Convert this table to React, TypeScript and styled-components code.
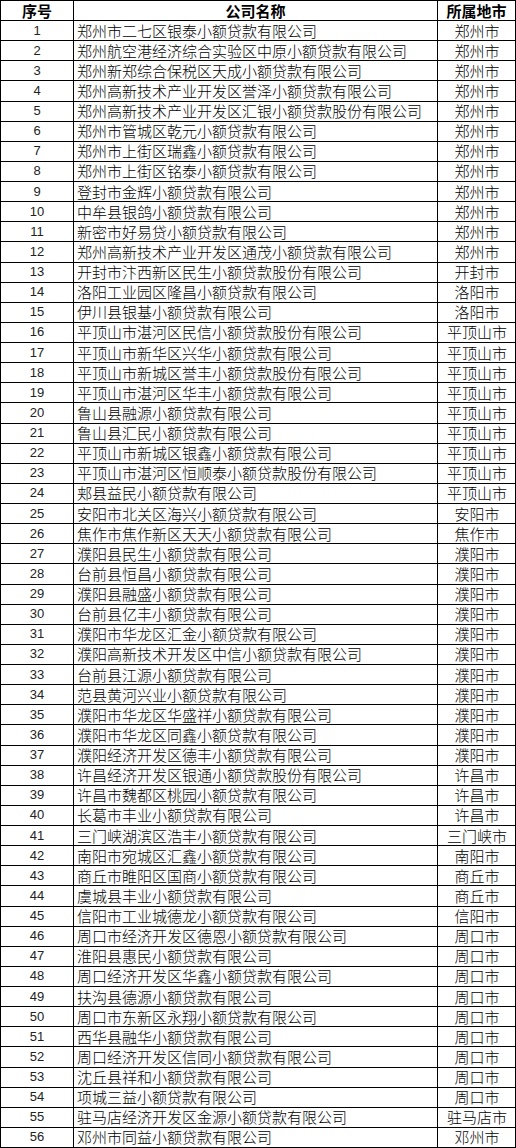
import React from "react";
import styled, { createGlobalStyle } from "styled-components";

const Global = createGlobalStyle`
  html, body { margin: 0; padding: 0; background: #fff; }
  body { font-family: "Noto Sans CJK SC", "Liberation Sans", sans-serif; color: #000; }
`;

type Row = [string, string];

const rows: Row[] = [
  ["郑州市二七区银泰小额贷款有限公司", "郑州市"],
  ["郑州航空港经济综合实验区中原小额贷款有限公司", "郑州市"],
  ["郑州新郑综合保税区天成小额贷款有限公司", "郑州市"],
  ["郑州高新技术产业开发区誉泽小额贷款有限公司", "郑州市"],
  ["郑州高新技术产业开发区汇银小额贷款股份有限公司", "郑州市"],
  ["郑州市管城区乾元小额贷款有限公司", "郑州市"],
  ["郑州市上街区瑞鑫小额贷款有限公司", "郑州市"],
  ["郑州市上街区铭泰小额贷款有限公司", "郑州市"],
  ["登封市金辉小额贷款有限公司", "郑州市"],
  ["中牟县银鸽小额贷款有限公司", "郑州市"],
  ["新密市好易贷小额贷款有限公司", "郑州市"],
  ["郑州高新技术产业开发区通茂小额贷款有限公司", "郑州市"],
  ["开封市汴西新区民生小额贷款股份有限公司", "开封市"],
  ["洛阳工业园区隆昌小额贷款有限公司", "洛阳市"],
  ["伊川县银基小额贷款有限公司", "洛阳市"],
  ["平顶山市湛河区民信小额贷款股份有限公司", "平顶山市"],
  ["平顶山市新华区兴华小额贷款有限公司", "平顶山市"],
  ["平顶山市新城区誉丰小额贷款股份有限公司", "平顶山市"],
  ["平顶山市湛河区华丰小额贷款有限公司", "平顶山市"],
  ["鲁山县融源小额贷款有限公司", "平顶山市"],
  ["鲁山县汇民小额贷款有限公司", "平顶山市"],
  ["平顶山市新城区银鑫小额贷款有限公司", "平顶山市"],
  ["平顶山市湛河区恒顺泰小额贷款股份有限公司", "平顶山市"],
  ["郏县益民小额贷款有限公司", "平顶山市"],
  ["安阳市北关区海兴小额贷款有限公司", "安阳市"],
  ["焦作市焦作新区天天小额贷款有限公司", "焦作市"],
  ["濮阳县民生小额贷款有限公司", "濮阳市"],
  ["台前县恒昌小额贷款有限公司", "濮阳市"],
  ["濮阳县融盛小额贷款有限公司", "濮阳市"],
  ["台前县亿丰小额贷款有限公司", "濮阳市"],
  ["濮阳市华龙区汇金小额贷款有限公司", "濮阳市"],
  ["濮阳高新技术开发区中信小额贷款有限公司", "濮阳市"],
  ["台前县江源小额贷款有限公司", "濮阳市"],
  ["范县黄河兴业小额贷款有限公司", "濮阳市"],
  ["濮阳市华龙区华盛祥小额贷款有限公司", "濮阳市"],
  ["濮阳市华龙区同鑫小额贷款有限公司", "濮阳市"],
  ["濮阳经济开发区德丰小额贷款有限公司", "濮阳市"],
  ["许昌经济开发区银通小额贷款股份有限公司", "许昌市"],
  ["许昌市魏都区桃园小额贷款有限公司", "许昌市"],
  ["长葛市丰业小额贷款有限公司", "许昌市"],
  ["三门峡湖滨区浩丰小额贷款有限公司", "三门峡市"],
  ["南阳市宛城区汇鑫小额贷款有限公司", "南阳市"],
  ["商丘市睢阳区国商小额贷款有限公司", "商丘市"],
  ["虞城县丰业小额贷款有限公司", "商丘市"],
  ["信阳市工业城德龙小额贷款有限公司", "信阳市"],
  ["周口市经济开发区德恩小额贷款有限公司", "周口市"],
  ["淮阳县惠民小额贷款有限公司", "周口市"],
  ["周口经济开发区华鑫小额贷款有限公司", "周口市"],
  ["扶沟县德源小额贷款有限公司", "周口市"],
  ["周口市东新区永翔小额贷款有限公司", "周口市"],
  ["西华县融华小额贷款有限公司", "周口市"],
  ["周口经济开发区信同小额贷款有限公司", "周口市"],
  ["沈丘县祥和小额贷款有限公司", "周口市"],
  ["项城三益小额贷款有限公司", "周口市"],
  ["驻马店经济开发区金源小额贷款有限公司", "驻马店市"],
  ["邓州市同益小额贷款有限公司", "邓州市"],
];

const Sheet = styled.table`
  width: 515px;
  border-collapse: collapse;
  table-layout: fixed;
  border: 1px solid #000;
`;

const HeadRow = styled.tr`
  height: 20px;
`;

const BodyRow = styled.tr`
  height: 20.125px;
`;

const HeadCell = styled.th`
  border: 1px solid #000;
  padding: 0;
  font-family: "Noto Sans CJK SC", sans-serif;
  font-weight: 700;
  font-size: 15px;
  line-height: 18px;
  text-align: center;
  vertical-align: middle;
  white-space: nowrap;
  overflow: hidden;
`;

const NumCell = styled.td`
  border: 1px solid #000;
  padding: 0;
  font-family: "Liberation Sans", Arial, sans-serif;
  font-size: 13px;
  line-height: 18px;
  text-align: center;
  vertical-align: middle;
  color: #222;
`;

const NameCell = styled.td<{ $dotted?: boolean }>`
  border: 1px solid #000;
  ${(p) => (p.$dotted ? "border-bottom: 1px dotted #000;" : "")}
  padding: 0 0 0 3px;
  font-family: "Noto Sans CJK SC", sans-serif;
  font-weight: 300;
  font-size: 15px;
  line-height: 18px;
  text-align: left;
  vertical-align: middle;
  white-space: nowrap;
  overflow: hidden;
`;

const CityCell = styled.td`
  border: 1px solid #000;
  padding: 0 0 0 1px;
  font-family: "Noto Sans CJK SC", sans-serif;
  font-weight: 300;
  font-size: 15px;
  line-height: 18px;
  text-align: center;
  vertical-align: middle;
  white-space: nowrap;
  overflow: hidden;
`;

export default function App() {
  return (
    <>
      <Global />
      <Sheet>
        <colgroup>
          <col style={{ width: 73 }} />
          <col style={{ width: 364 }} />
          <col style={{ width: 78 }} />
        </colgroup>
        <thead>
          <HeadRow>
            <HeadCell>序号</HeadCell>
            <HeadCell>公司名称</HeadCell>
            <HeadCell>所属地市</HeadCell>
          </HeadRow>
        </thead>
        <tbody>
          {rows.map(([name, city], i) => (
            <BodyRow key={i}>
              <NumCell>{i + 1}</NumCell>
              <NameCell $dotted={i === 34}>{name}</NameCell>
              <CityCell>{city}</CityCell>
            </BodyRow>
          ))}
        </tbody>
      </Sheet>
    </>
  );
}
